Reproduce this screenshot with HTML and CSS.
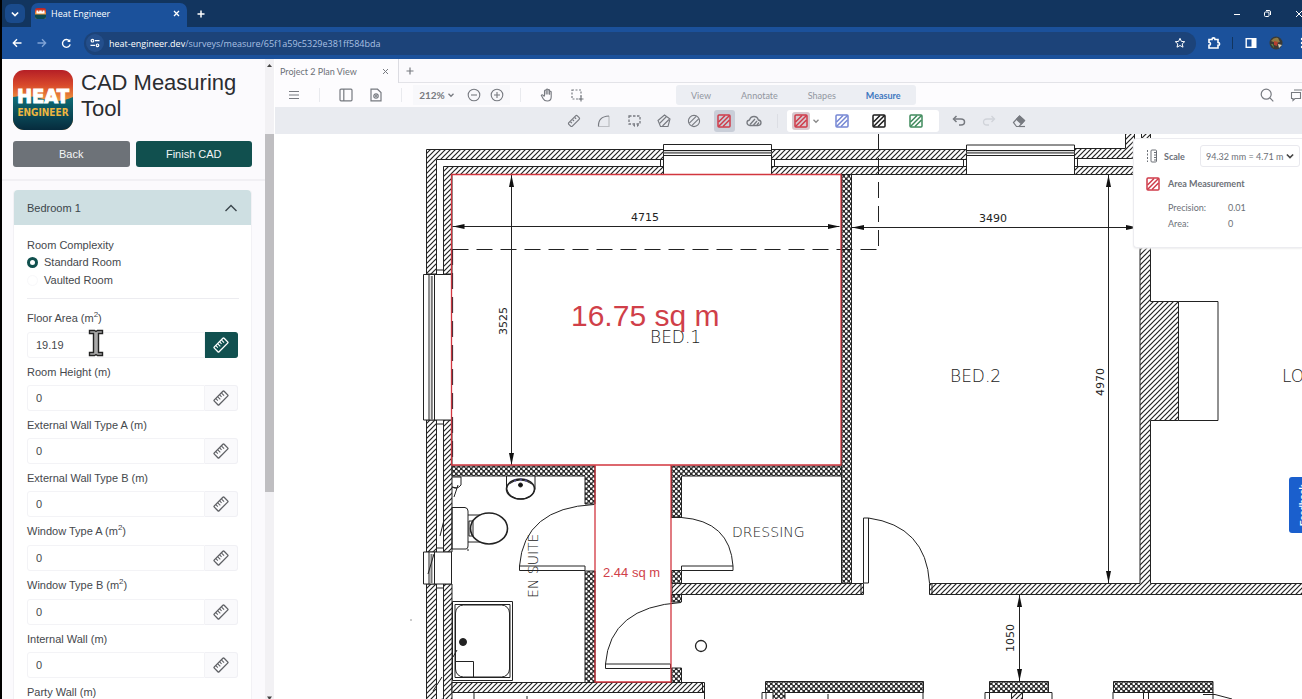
FILE: index.html
```html
<!DOCTYPE html>
<html lang="en">
<head>
<meta charset="utf-8">
<title>Heat Engineer</title>
<link rel="stylesheet" href="styles.css">
</head>
<body>
<svg width="0" height="0" class="defs" aria-hidden="true">
  <defs>
    <linearGradient id="sunset" x1="0" y1="0" x2="0" y2="1">
      <stop offset="0" stop-color="#b51f26"/><stop offset=".25" stop-color="#d8482b"/><stop offset=".52" stop-color="#ef9a3f"/>
    </linearGradient>
    <linearGradient id="sea" x1="0" y1="0" x2="0" y2="1">
      <stop offset="0" stop-color="#0f6f78"/><stop offset="1" stop-color="#062b3d"/>
    </linearGradient>
    <symbol id="ruler" viewBox="0 0 18 18">
      <g transform="rotate(-45 9 9)" fill="none" stroke="currentColor" stroke-width="1.5"><rect x="1.2" y="5.2" width="15.6" height="7.6" rx="1"/><path d="M4.4 5.5v3M7.4 5.5v4M10.4 5.5v3M13.4 5.5v4" stroke-width="1.2"/></g>
    </symbol>
    <symbol id="hatch-box" viewBox="0 0 14 14">
      <rect x="1" y="1" width="12" height="12" rx="1" fill="none" stroke="currentColor" stroke-width="1.5"/>
      <path d="M1.500 8l6.500-6.500M1.500 12.500l11-11M6 12.500l6.500-6.500" fill="none" stroke="currentColor" stroke-width="1.500"/>
    </symbol>
    <symbol id="chev" viewBox="0 0 8 8"><path d="M1.500 2.800l2.500 2.500 2.500-2.500" fill="none" stroke="currentColor" stroke-width="1.300"/></symbol>
  </defs>
</svg>

<header class="browser">
  <div class="tabstrip">
    <button class="tabsearch" aria-label="Search tabs"><svg width="10" height="10"><use href="#chev"/></svg></button>
    <div class="tab">
      <svg width="11" height="11" viewBox="0 0 60 60"><rect width="60" height="60" rx="12" fill="url(#sunset)"/><path d="M0 36h60v12q0 12-12 12H12Q0 60 0 48z" fill="#0c4a50"/><path d="M8 14h10v7h5v-7h14v7h5v-7h10v16H8z" fill="#fff"/></svg>
      <span class="tab-title">Heat Engineer</span>
      <button class="ghost" aria-label="Close tab"><svg width="7" height="7" viewBox="0 0 7 7"><path d="M1 1l5 5M6 1L1 6" stroke="currentColor" stroke-width="1.300"/></svg></button>
    </div>
    <button class="ghost newtab" aria-label="New tab"><svg width="8" height="8" viewBox="0 0 8 8"><path d="M4 0.500v7M.500 4h7" stroke="currentColor" stroke-width="1.500"/></svg></button>
    <div class="winctl">
      <button class="ghost" aria-label="Minimise"><svg width="8" height="8" viewBox="0 0 8 8"><path d="M1 4.500h6" stroke="currentColor"/></svg></button>
      <button class="ghost" aria-label="Restore"><svg width="9" height="9" viewBox="0 0 9 9" fill="none" stroke="currentColor"><rect x="1.500" y="3" width="4.500" height="4.500" rx="1"/><path d="M3 1.500h3q1.500 0 1.500 1.500v3"/></svg></button>
      <button class="ghost" aria-label="Close"><svg width="8" height="8" viewBox="0 0 8 8"><path d="M1 1l6 6M7 1L1 7" stroke="currentColor"/></svg></button>
    </div>
  </div>
  <div class="navbar">
    <button class="ghost nav" aria-label="Back"><svg width="10" height="10" viewBox="0 0 10 10" fill="none" stroke="currentColor" stroke-width="1.400"><path d="M9.500 5H1.500M5 1.200L1.300 5 5 8.800"/></svg></button>
    <button class="ghost nav dim" aria-label="Forward"><svg width="10" height="10" viewBox="0 0 10 10" fill="none" stroke="currentColor" stroke-width="1.300"><path d="M.5 5h8M5 1.200L8.700 5 5 8.800"/></svg></button>
    <button class="ghost nav" aria-label="Reload"><svg width="11" height="11" viewBox="0 0 11 11" fill="none" stroke="currentColor" stroke-width="1.400"><path d="M9.200 6.300A3.900 3.900 0 1 1 8.300 2.800"/><path d="M9.300.8v3.100H6.200z" fill="currentColor" stroke="none"/></svg></button>
    <div class="omnibox">
      <span class="siteinfo"><svg width="10" height="10" viewBox="0 0 10 10" fill="none" stroke="currentColor" stroke-width="1.200"><circle cx="2.500" cy="2.700" r="1.300"/><path d="M5 2.700h4.500M.5 7.300H5"/><circle cx="7.500" cy="7.300" r="1.300"/></svg></span>
      <span class="url"><b>heat-engineer.dev</b>/surveys/measure/65f1a59c5329e381ff584bda</span>
      <button class="ghost star" aria-label="Bookmark"><svg width="12" height="12" viewBox="0 0 12 12"><path d="M6 1.300l1.400 3.100 3.300.3-2.500 2.200.8 3.300L6 8.500l-3 1.700.8-3.300L1.300 4.700l3.300-.3z" fill="none" stroke="currentColor"/></svg></button>
    </div>
    <button class="ghost ext" aria-label="Extensions"><svg width="14" height="14" viewBox="0 0 14 14" fill="none" stroke="currentColor" stroke-width="1.600"><path d="M2 3.500h3q0-1.600 1.500-1.600T8 3.500h3v3q1.600 0 1.600 1.400T11 9.300V12H2V9.200q1.500 0 1.500-1.400T2 6.300z"/></svg></button>
    <span class="navdiv"></span>
    <button class="ghost side" aria-label="Side panel"><svg width="12" height="12" viewBox="0 0 12 12"><rect x="1.200" y="1.700" width="9.600" height="8.600" fill="none" stroke="currentColor" stroke-width="1.400"/><path d="M6.500 1.500H11v9H6.500z" fill="currentColor"/></svg></button>
    <button class="ghost avatar" aria-label="Profile"><svg width="14" height="14" viewBox="0 0 14 14"><circle cx="7" cy="7" r="6.500" fill="#3a3a35"/><path d="M2 5q3-4 7-3l2 4-4 1z" fill="#8f7a45"/><path d="M5 5l4 1-1 4-3-1z" fill="#b4402f"/><path d="M9 8l4 1-3 3z" fill="#d9d2c0"/><path d="M2 8l3 4-1-4z" fill="#5d8a4b"/></svg></button>
    <button class="ghost menu" aria-label="Menu"><svg width="4" height="12" viewBox="0 0 4 12" fill="currentColor"><circle cx="2" cy="2" r="1.200"/><circle cx="2" cy="6" r="1.200"/><circle cx="2" cy="10" r="1.200"/></svg></button>
  </div>
</header>

<main class="app">
  <aside class="sidebar">
    <div class="side-head">
      <div class="brand">
        <svg class="logo" width="60" height="60" viewBox="0 0 60 60" role="img" aria-label="Heat Engineer">
          <clipPath id="lc"><rect width="60" height="60" rx="11"/></clipPath>
          <g clip-path="url(#lc)"><rect width="60" height="60" fill="url(#sunset)"/><path d="M0 27q15-3 30 2t30-2v33H0z" fill="url(#sea)"/></g>
          <text x="30" y="33" class="logo-heat" text-anchor="middle">HEAT</text>
          <text x="30" y="46" class="logo-eng" text-anchor="middle">ENGINEER</text>
        </svg>
        <h1>CAD Measuring Tool</h1>
      </div>
      <div class="actions"><button class="btn grey">Back</button><button class="btn teal">Finish CAD</button></div>
    </div>
    <section class="card">
      <button class="card-head">Bedroom 1 <svg width="14" height="8" viewBox="0 0 14 8"><path d="M1.500 7L7 1.500 12.500 7" fill="none" stroke="currentColor" stroke-width="1.400"/></svg></button>
      <form class="card-body">
        <fieldset>
          <legend>Room Complexity</legend>
          <label><input type="radio" name="complexity" checked>Standard Room</label>
          <label><input type="radio" name="complexity">Vaulted Room</label>
        </fieldset>
        <hr>
        <div class="field"><label class="tall" for="f1">Floor Area (m<sup>2</sup>)</label><div class="row"><input type="text" id="f1" value="19.19"><button type="button" class="on" aria-label="Measure floor area"><svg width="16" height="16"><use href="#ruler"/></svg></button></div></div>
        <div class="field"><label for="f2">Room Height (m)</label><div class="row"><input type="text" id="f2" value="0"><button type="button" aria-label="Measure"><svg width="16" height="16"><use href="#ruler"/></svg></button></div></div>
        <div class="field"><label for="f3">External Wall Type A (m)</label><div class="row"><input type="text" id="f3" value="0"><button type="button" aria-label="Measure"><svg width="16" height="16"><use href="#ruler"/></svg></button></div></div>
        <div class="field"><label for="f4">External Wall Type B (m)</label><div class="row"><input type="text" id="f4" value="0"><button type="button" aria-label="Measure"><svg width="16" height="16"><use href="#ruler"/></svg></button></div></div>
        <div class="field"><label class="tall" for="f5">Window Type A (m<sup>2</sup>)</label><div class="row"><input type="text" id="f5" value="0"><button type="button" aria-label="Measure"><svg width="16" height="16"><use href="#ruler"/></svg></button></div></div>
        <div class="field"><label class="tall" for="f6">Window Type B (m<sup>2</sup>)</label><div class="row"><input type="text" id="f6" value="0"><button type="button" aria-label="Measure"><svg width="16" height="16"><use href="#ruler"/></svg></button></div></div>
        <div class="field"><label for="f7">Internal Wall (m)</label><div class="row"><input type="text" id="f7" value="0"><button type="button" aria-label="Measure"><svg width="16" height="16"><use href="#ruler"/></svg></button></div></div>
        <div class="field"><label for="f8">Party Wall (m)</label><div class="row"><input type="text" id="f8" value="0"><button type="button" aria-label="Measure"><svg width="16" height="16"><use href="#ruler"/></svg></button></div></div>
      </form>
    </section>
  </aside>
  <div class="scroll" aria-hidden="true"><svg width="9" height="12" viewBox="0 0 9 12"><path d="M2 8l2.500-3L7 8z" fill="#444"/></svg><span class="thumb"></span><svg width="9" height="6" viewBox="0 0 9 6"><path d="M2 3.500h5L4.500 7z" fill="#444"/></svg></div>

  <section class="viewer">
    <div class="doctabs">
      <div class="doctab"><span>Project 2 Plan View</span><button class="plain" aria-label="Close document"><svg width="7" height="7" viewBox="0 0 7 7"><path d="M1 1l5 5M6 1L1 6" stroke="currentColor"/></svg></button></div>
      <button class="plain add" aria-label="Add document"><svg width="8" height="8" viewBox="0 0 8 8"><path d="M4 .5v7M.5 4h7" stroke="currentColor" stroke-width="1.200"/></svg></button>
    </div>
    <div class="bar top">
      <button class="ib" aria-label="Menu"><svg width="12" height="10" viewBox="0 0 12 10"><path d="M1 1.500h10M1 5h10M1 8.500h10" stroke="currentColor"/></svg></button>
      <i class="sep"></i>
      <button class="ib" aria-label="Panels"><svg width="14" height="14" viewBox="0 0 14 14" fill="none" stroke="currentColor" stroke-width="1.200"><rect x="1" y="1.200" width="12" height="11.600" rx="1"/><path d="M4.800 1v12"/></svg></button>
      <button class="ib" aria-label="View controls"><svg width="14" height="14" viewBox="0 0 14 14" fill="none" stroke="currentColor" stroke-width="1.200"><path d="M2 1.200h6.500L12 4.500v8.300H2z"/><circle cx="7" cy="8" r="2.200"/><circle cx="7" cy="8" r=".5"/></svg></button>
      <i class="sep"></i>
      <div class="zoom"><button class="plain pct">212% <svg width="8" height="8"><use href="#chev"/></svg></button>
        <button class="plain" aria-label="Zoom out"><svg width="14" height="14" viewBox="0 0 14 14" fill="none" stroke="currentColor" stroke-width="1.100"><circle cx="7" cy="7" r="5.800"/><path d="M4 7h6"/></svg></button>
        <button class="plain" aria-label="Zoom in"><svg width="14" height="14" viewBox="0 0 14 14" fill="none" stroke="currentColor" stroke-width="1.100"><circle cx="7" cy="7" r="5.800"/><path d="M4 7h6M7 4v6"/></svg></button></div>
      <i class="sep"></i>
      <button class="ib" aria-label="Pan"><svg width="14" height="14" viewBox="0 0 14 14" fill="none" stroke="currentColor" stroke-width="1.100"><path d="M4.500 8V3q0-1 .8-1t.9 1v3.500V2q0-1 .8-1t.9 1v4.500V2.500q0-.9.8-.9t.9.9v4.300V4q0-.8.8-.8t.8.800v5q0 4-4 4-2.800 0-4-2.300L1.300 7.300q.8-1.200 2 0L4.500 8.500"/></svg></button>
      <button class="ib" aria-label="Select"><svg width="14" height="14" viewBox="0 0 14 14" fill="none" stroke="currentColor" stroke-width="1.200"><path d="M2 2h9v9H2z" stroke-dasharray="2 1.500"/><path d="M11 8.500v5M8.500 11h5"/></svg></button>
      <nav class="modes"><button>View</button><button>Annotate</button><button>Shapes</button><button class="cur">Measure</button></nav>
      <div class="right">
        <button class="ib" aria-label="Search"><svg width="14" height="14" viewBox="0 0 14 14" fill="none" stroke="currentColor" stroke-width="1.200"><circle cx="6.200" cy="6.200" r="5"/><path d="M10 10l3.300 3.300"/></svg></button>
        <button class="ib" aria-label="Comments"><svg width="14" height="14" viewBox="0 0 14 14" fill="none" stroke="currentColor" stroke-width="1.100"><path d="M1.500 4.500h9v6H5l-2 2v-2H1.500z"/><path d="M4 2h9v6"/></svg></button>
      </div>
    </div>
    <div class="bar tools">
      <button class="ib" aria-label="Distance"><svg width="14" height="14" viewBox="0 0 14 14" fill="none" stroke="currentColor" stroke-width="1.200"><g transform="rotate(-45 7 7)"><rect x="1" y="4.500" width="12" height="5" rx="1.200"/><path d="M4 5v2M7 5v2M10 5v2"/></g></svg></button>
      <button class="ib" aria-label="Arc"><svg width="14" height="14" viewBox="0 0 14 14" fill="none" stroke="currentColor" stroke-width="1.200"><path d="M1.500 12.500Q1 2.500 12 2"/><path d="M1.500 12.500H12V2" stroke-opacity=".4"/></svg></button>
      <button class="ib" aria-label="Perimeter"><svg width="15" height="14" viewBox="0 0 15 14" fill="none" stroke="currentColor" stroke-width="1.300"><path d="M2 2h11v8H2z" stroke-dasharray="2.500 1.500"/><path d="M6 11.500l2-1.500v3zM10 10l2 1.500-2 1.500z" fill="currentColor" stroke="none"/></svg></button>
      <button class="ib" aria-label="Polygon area"><svg width="14" height="14" viewBox="0 0 14 14" fill="none" stroke="currentColor" stroke-width="1.100"><path d="M1 6.500L7.500 1 13 5l-2 7.500H3.500z"/><path d="M2.500 9.500l7-7M5.500 12l6.500-6.500"/></svg></button>
      <button class="ib" aria-label="Ellipse area"><svg width="14" height="14" viewBox="0 0 14 14" fill="none" stroke="currentColor" stroke-width="1.100"><circle cx="7" cy="7" r="5.600"/><path d="M2.300 9.200l6.900-6.900M4.800 11.700l6.900-6.900"/></svg></button>
      <button class="ib red" aria-label="Rectangle area"><span class="hl"><svg width="14" height="14"><use href="#hatch-box"/></svg></span></button>
      <button class="ib" aria-label="Cloud area"><svg width="16" height="14" viewBox="0 0 16 14" fill="none" stroke="currentColor" stroke-width="1.300"><path d="M4 11.500q-3-.3-3-2.700T3.500 6Q4.500 2.500 8 2.500T12.300 6Q15 6.300 15 8.800t-3 2.700z"/><path d="M4 10.500l5-5.500M7.500 11L11 7M11 11l2-2.500"/></svg></button>
      <i class="sep"></i>
      <div class="presets">
        <button class="ps red" aria-label="Red preset"><span class="hl small"><svg width="14" height="14"><use href="#hatch-box"/></svg></span><svg class="grey-ic" width="8" height="8"><use href="#chev"/></svg></button>
        <button class="ps blue" aria-label="Blue preset"><svg width="14" height="14"><use href="#hatch-box"/></svg></button>
        <button class="ps black" aria-label="Black preset"><svg width="14" height="14"><use href="#hatch-box"/></svg></button>
        <button class="ps green" aria-label="Green preset"><svg width="14" height="14"><use href="#hatch-box"/></svg></button>
      </div>
      <button class="ib" aria-label="Undo"><svg width="14" height="12" viewBox="0 0 14 12" fill="none" stroke="currentColor" stroke-width="1.500"><path d="M2 4h7q3.500 0 3.500 3T9 10H7"/><path d="M4.500 1L1.500 4l3 3"/></svg></button>
      <button class="ib faint" aria-label="Redo"><svg width="14" height="12" viewBox="0 0 14 12" fill="none" stroke="currentColor" stroke-width="1.300"><path d="M12 4H5Q1.500 4 1.500 7T5 10h2"/><path d="M9.500 1l3 3-3 3"/></svg></button>
      <button class="ib" aria-label="Eraser"><svg width="14" height="14" viewBox="0 0 14 14" fill="none" stroke="currentColor" stroke-width="1.200"><path d="M1.500 8.500L7.500 2l5 4.500-5.500 6H4.500z"/><path d="M7.500 2l5 4.500-3 3.300-5-4.500z" fill="currentColor"/><path d="M7 12.500h6"/></svg></button>
    </div>
    <div class="canvas">
      <svg class="plan" width="1027" height="565" viewBox="275 134 1027 565">
        <defs>
          <pattern id="h" width="5" height="5" patternUnits="userSpaceOnUse"><rect width="5" height="5" fill="#fff"/><path d="M-1 1l2-2M-1 6L6-1M4 6l2-2" stroke="#222" stroke-width="1.200"/></pattern>
          <pattern id="x" width="5" height="5" patternUnits="userSpaceOnUse"><rect width="5" height="5" fill="#2b2b2b"/><circle cx="1.250" cy="1.250" r="1.300" fill="#fff"/><circle cx="3.750" cy="3.750" r="1.300" fill="#fff"/></pattern>
          <marker id="a" viewBox="0 0 12 6" refX="12" refY="3" markerWidth="12" markerHeight="6" markerUnits="userSpaceOnUse" orient="auto-start-reverse"><path d="M0 .5L12 3 0 5.500z" fill="#111"/></marker>
        </defs>
        <g fill="url(#h)" stroke="#222" stroke-width="1">
          <path d="M426.500 149.500H663.500V159.500H436.500V274H426.500zM443.500 166.500H663.500V174.500H452V274H443.500z"/>
          <path d="M771.500 149.500H966.500V159.500H771.500zM771.500 166.500H966.500V174.500H771.500z"/>
          <path d="M1074.500 148.500H1125.500V130H1134.500V158.500H1074.500zM1074.500 166.500H1145V174.500H1074.500zM1141.500 130H1150.500V145H1141.500z"/>
          <path d="M426.500 420H436.500V552H426.500zM443.500 420H452V552H443.500zM426.500 584H436.500V702H426.500zM443.500 584H452V702H443.500z"/>
          <path d="M452 682.500H704.500V692.500H452zM672 583.500H863.500V594.500H672z"/>
          <path d="M929.500 583.500H1140V240H1150.500V301.500H1178.500V420.500H1150.500V583.500H1310V594.500H929.500z"/>
          <path d="M1011.500 692H1022.500V702H1011.500z"/>
        </g>
        <g fill="url(#x)" stroke="#222">
          <path d="M841.500 174.500H851.500V583.500H841.500zM452 466H595V504H585V476H452zM671.500 466H841.500V476H681.500V517H671.500z"/>
          <path d="M585 571H595V682.500H585zM671.500 570.500H681.500V583.500H671.500zM671.500 594.500H681.500V602H671.500zM671.500 668H681.500V682.500H671.500z"/>
          <path d="M765.500 681.500H923.500V692.500H785V702H773V692.500H765.500zM989.500 681.500H1048.500V692.500H989.500zM1113.500 681.500H1213V692.500H1113.500z"/>
        </g>
        <g fill="#fff" stroke="#222">
          <path d="M663.500 144.500H771.500V174.500H663.500zM966.500 145H1074.500V174.500H966.500zM423.500 274.500H451.500V420H423.500zM423.500 552H451.500V584H423.500z"/>
          <path d="M519.500 566H585V570.500H519.500zM681.500 566H733V570.500H681.500zM605.500 664H670.500V668.500H605.500zM863.500 518H868.500V583H863.500z"/>
          <path d="M1178.500 301.500H1218V420.500H1178.500z"/>
        </g>
        <g fill="none" stroke="#222">
          <path d="M663.500 150.500H771.500M663.500 155.500H771.500M966.500 150.500H1074.500M966.500 155.500H1074.500M429 274V420M434.500 274V420M436.500 270H443M436.500 424H443M436.500 548H443M436.500 588H443"/>
          <path d="M663.500 152.800H771.500M966.500 152.800H1074.500M431.800 276V420M431.500 554V583" stroke="#777" stroke-width="2"/>
          <path d="M429 552V584M434.500 552V584M428 574l6-20M660.500 159V166M774.500 159V166M963.500 159V166M1077.500 159V166"/>
          <path d="M851.500 174.500H1140M861 583V594M932 583V594M702.500 682V692M704.500 692V699"/>
          <path d="M594 504.500Q524 508 519.500 566M681.500 517.500Q730 521 733 566M681 602.500Q610 607 605.500 664M868.500 518Q926 526 929.500 583M671 517.500H682"/>
          <path d="M766 692.500H762V702M766 692V702M785 692.500H923V702M828 699V694M985 702V692.500H1049M989.500 692V702M1048 692.500H1052V702M1113 692V702M1143.500 692V702M1148.500 692V702M1213 692V702M1203 694.500H1215L1232 699" />
          <path d="M452.500 249.500H878.500" stroke-dasharray="16 8" stroke-width="1.200"/><path d="M878.500 134V249.500" stroke-dasharray="16 8"/>
          <circle cx="701" cy="646" r="5.500" stroke-width="1.300"/>
          <path d="M474 692V699M527 699v-3M443 699l-12 3M440 536l4-16M433 691l9-14"/>
        </g>
        <g fill="none" stroke="#222">
          <path d="M452 507.500H465Q468 508 468 511V546Q468 549 466 549H452z"/>
          <path d="M468 515H480M468 542H480"/><ellipse cx="489" cy="528.500" rx="18.500" ry="15.500" stroke-width="1.600"/><path d="M469 521h4v15h-4zM468 549v2"/>
          <path d="M506.500 476V489Q510 499 521 499T535 489V476"/><ellipse cx="520.500" cy="489" rx="14" ry="10" stroke-width="1.600"/><path d="M509 484q11-8 23 0" /><circle cx="520.500" cy="485" r="2" fill="#111"/><path d="M515 479v3M521 478v3M526 479v3" stroke="#5a52a8"/>
          <path d="M452 477h9v8q-4 5-9 2M454 497l4-12M452 487l5 1"/>
          <path d="M452.500 601.500H512.500V680.500H452.500zM455 604.500H510V677.500H455zM455 661.500H473.500V677.500"/><rect x="455.500" y="605" width="54" height="72" rx="8"/><circle cx="463" cy="642" r="3.500" fill="#222"/><path d="M453 657l4-7"/>
        </g>
        <g stroke="#222" fill="none">
          <path d="M452.500 226.500H839.500" marker-start="url(#a)" marker-end="url(#a)"/><path d="M852 227.500H1138" marker-start="url(#a)" marker-end="url(#a)"/><path d="M511.500 175V465" marker-start="url(#a)" marker-end="url(#a)"/><path d="M1108.500 175V583" marker-start="url(#a)" marker-end="url(#a)"/><path d="M1019.500 595V681" marker-start="url(#a)" marker-end="url(#a)"/>
        </g>
        <g fill="none" stroke="#d2363f" stroke-width="1.300"><path d="M451.500 174.500H841V465H451.500zM595 465H671V682H595z"/></g>
        <path d="M452.500 249V465" stroke="#54303a" stroke-width="1.200" stroke-dasharray="16 8" fill="none"/>
        <g class="measures"><text x="631" y="221">4715</text><text x="979" y="222">3490</text><text transform="translate(507 335) rotate(-90)">3525</text><text transform="translate(1104 396) rotate(-90)">4970</text><text transform="translate(1014 652) rotate(-90)">1050</text></g>
        <g class="room"><text x="650" y="343" class="big">BED.1</text><text x="950" y="382" class="big">BED.2</text><text x="732" y="537">DRESSING</text><text transform="translate(538 598) rotate(-90)">EN SUITE</text><text x="1282" y="382" class="big">LO</text></g>
        <text x="571" y="326" class="area-l">16.75 sq m</text><text x="603" y="577" class="area-s">2.44 sq m</text>
        <circle cx="411" cy="620" r="1" fill="#bbb"/>
      </svg>
      <section class="panel">
        <div class="scale"><svg width="12" height="14" viewBox="0 0 12 14" fill="none" stroke="currentColor"><path d="M1.500 1v12" stroke-dasharray="2 1.500"/><rect x="5" y="1" width="5.500" height="12" rx="1"/><path d="M8 3.500h2.500M8 6h2.500M8 8.500h2.500M8 11h2.500"/></svg>
          <label for="scale">Scale</label>
          <div class="selwrap"><select id="scale"><option>94.32 mm = 4.71 m</option></select><svg width="10" height="10"><use href="#chev"/></svg></div></div>
        <h2><svg class="redic" width="14" height="14"><use href="#hatch-box"/></svg>Area Measurement</h2>
        <dl><dt>Precision:</dt><dd>0.01</dd><dt>Area:</dt><dd>0</dd></dl>
      </section>
      <button class="feedback">Feedback</button>
    </div>
  </section>
</main>
<svg class="ibeam" width="16" height="28" viewBox="0 0 16 28" aria-hidden="true"><path d="M1.500 1.500h5l1.500 1 1.500-1h5v3h-4v19h4v3h-5l-1.500-1-1.500 1h-5v-3h4v-19h-4z" fill="#aaa" stroke="#222" stroke-width="1.400"/></svg>
</body>
</html>
```
FILE: styles.css
```css
* { box-sizing: border-box; }
body { margin: 0; height: 100vh; overflow: hidden; display: flex; flex-direction: column; border-left: 2px solid #000; background: #fff; font-family: "Liberation Sans", Arial, sans-serif; font-size: 11px; color: #45484c; }
button { font: inherit; color: inherit; border: 0; background: none; padding: 0; display: flex; align-items: center; justify-content: center; }
svg { flex: none; display: block; }
.defs { position: absolute; }

.browser { flex: none; color: #fff; font-family: "Open Sans", "Noto Sans", sans-serif; font-size: 9px; }
.tabstrip { height: 27px; background: #12355f; display: flex; align-items: center; overflow: hidden; }
.tabsearch { width: 20px; height: 19px; border-radius: 6px; background: #1a4b8c; margin: 0 6px 0 3px; }
.tab { width: 156px; height: 24px; align-self: flex-end; background: #1b519b; border-radius: 7px 7px 0 0; display: flex; align-items: center; padding: 0 7px 3px 4px; gap: 5px; }
.tab-title { flex: 1; }
.newtab { width: 28px; }
.winctl { margin-left: auto; margin-right: -12px; display: flex; }
.winctl .ghost { width: 31px; height: 24px; }
.navbar { height: 32px; background: #1b519b; display: flex; align-items: center; overflow: hidden; padding-left: 2px; }
.nav { width: 25px; }
.dim { color: #7fa3d6; }
.omnibox { flex: 1; height: 23px; margin-left: 5px; border-radius: 12px; background: #1c4379; display: flex; align-items: center; padding: 0 10px 0 2px; }
.siteinfo { width: 18px; height: 18px; border-radius: 9px; background: #244f8c; display: flex; align-items: center; justify-content: center; }
.url { margin-left: 5px; color: #a9c0e2; font-size: 9px; }
.url b { font-weight: 400; color: #fff; }
.star { margin-left: auto; }
.ext { width: 36px; }
.navdiv { width: 1px; height: 12px; background: #12355f; }
.side { width: 36px; }
.avatar { width: 14px; }
.menu { width: 16px; margin-left: 11px; margin-right: -8px; }

.app { flex: 1; min-height: 0; display: flex; }
.sidebar { width: 263px; flex: none; background: #fbfafd; overflow: hidden; }
.side-head { padding: 11px 13px 12px 11px; border-bottom: 2px solid #f1f0f4; }
.brand { display: flex; gap: 8px; }
h1 { margin: 0; font-size: 22px; line-height: 26px; font-weight: 400; color: #2b2d31; }
.logo-heat { font: 700 20px "Liberation Sans Narrow", "DejaVu Sans Condensed", sans-serif; fill: #fff; stroke: #fff; }
.logo-eng { font: 700 10px "Liberation Sans Narrow", "DejaVu Sans Condensed", sans-serif; fill: #edb53f; }
.actions { display: flex; gap: 6px; margin-top: 11px; }
.btn { flex: 1; height: 26px; border-radius: 3px; color: #f3f5f6; }
.grey { background: #6d7278; }
.teal { background: #11504f; }
.card { margin: 9px 13px 0 11px; background: #fff; border: 1px solid #f2f1f5; border-top: 0; border-radius: 4px; }
.card-head { width: 100%; height: 35px; padding: 0 13px; background: #cedfe2; border-radius: 4px 4px 0 0; justify-content: space-between; color: #3b464b; }
.card-body { padding: 12px 12px 0 13px; margin: 0; }
fieldset { border: 0; padding: 0; margin: 0; display: flex; flex-direction: column; }
legend { padding: 0; line-height: 16px; }
fieldset label { display: flex; align-items: center; line-height: 18px; gap: 6px; }
input[type="radio"] { appearance: none; margin: 0; width: 11px; height: 11px; border-radius: 50%; border: 1px solid #f8f8fa; }
input[type="radio"]:checked { border: 3px solid #10504e; }
hr { border: 0; border-top: 1px solid #ececf0; margin: 9px 0 11px; }
.field > label { display: block; line-height: 16px; }
.field > label.tall { line-height: 17px; }
sup { font-size: 8px; line-height: 0; }
.row { display: flex; height: 26px; margin: 5px 1px 6px 0; }
.row input { flex: 1; min-width: 0; border: 1px solid #f3f3f6; border-radius: 3px 0 0 3px; padding: 0 8px; font: inherit; color: #45484c; background: #fff; }
.row button { width: 33px; border: 1px solid #f0f0f4; border-left: 0; background: #fafafc; border-radius: 0 3px 3px 0; color: #606266; }
.row button.on { background: #11504f; border-color: #11504f; color: #fff; }
.scroll { width: 9px; flex: none; background: #f2f1f4; display: flex; flex-direction: column; justify-content: space-between; }
.thumb { height: 56%; margin: 63px 0 auto; background: #bfbec1; }
.ibeam { position: absolute; left: 88px; top: 329px; }

.viewer { flex: 1; min-width: 0; display: flex; flex-direction: column; font-family: Lato, sans-serif; font-size: 9px; color: #6c7077; padding-left: 1px; }
.plain { color: #777a80; }
.doctabs { height: 24px; background: #fbfafd; display: flex; flex: none; border-bottom: 1px solid #e3e3e8; }
.doctab { width: 124px; height: 24px; background: #fdfcfe; border-right: 1px solid #dcdce2; display: flex; align-items: center; justify-content: space-between; padding: 0 9px 0 5px; }
.add { width: 21px; }
.bar { display: flex; align-items: center; flex: none; overflow: hidden; }
.ib { width: 30px; height: 24px; flex: none; color: #777a80; }
.sep { width: 1px; height: 14px; background: #e9eaee; margin: 0 11px 0 10px; flex: none; }
.top { height: 24px; background: #fdfcfe; padding-left: 4px; }
.zoom { display: flex; height: 20px; align-items: center; background: #f8f8fb; width: 97px; gap: 9px; }
.pct { font-size: 10px; font-weight: 700; width: 42px; margin-left: 3px; gap: 2px; }
.modes { display: flex; height: 20px; margin-left: 84px; background: #eceef3; flex: none; border-radius: 3px; color: #9296a0; }
.modes button { padding: 0 15px; }
.modes .cur { color: #3e78c0; font-weight: 700; }
.right { display: flex; margin-left: auto; margin-right: -10px; }
.tools { height: 27px; background: #e9ebf0; padding-left: 284px; }
.tools .sep { margin: 0 9px 0 8px; background: #dcdee4; }
.ib.red, .ps.red, .redic { color: #cf3b4a; }
.hl { width: 21px; height: 22px; display: flex; align-items: center; justify-content: center; background: #c9ced8; border-radius: 3px; }
.hl.small { width: 18px; height: 18px; background: #d9c9cf; }
.blue { color: #7587d4; }
.black { color: #1b1b1b; }
.green { color: #3f8a5c; }
.ib.faint { color: #d0d3d9; }
.presets { display: flex; height: 22px; background: #fff; padding-right: 5px; margin-right: 5px; border-radius: 3px; }
.ps { width: 37px; }
.ps.red { width: 36px; gap: 2px; padding-left: 2px; }
.grey-ic { color: #888; }
.canvas { position: relative; flex: 1; min-height: 0; overflow: hidden; background: #fff; }
.measures text, .room text { fill: #222; }
.measures { font: 11px "DejaVu Sans", sans-serif; }
.room { font: 200 14px "DejaVu Sans Light", "DejaVu Sans", sans-serif; }
.room .big { font-size: 17px; }
.area-l, .area-s { font-family: "Liberation Sans", Arial, sans-serif; fill: #d03f49; }
.area-l { font-size: 30px; }
.area-s { font-size: 13px; }

.panel { position: absolute; top: 4px; right: 0; width: 169px; height: 110px; background: #fff; border: 1px solid #ececf0; border-right: 0; border-radius: 4px 0 0 4px; padding: 6px 2px 0 12px; box-shadow: 0 1px 2px #eee; }
.scale { display: flex; align-items: center; }
.scale label { font-weight: 700; margin-left: 6px; }
.selwrap { position: relative; margin-left: auto; }
.selwrap select { appearance: none; width: 100px; height: 22px; border: 1px solid #e9e9ee; border-radius: 3px; background: #fff; color: #6c7077; font: inherit; padding: 0 5px; }
.selwrap svg { position: absolute; right: 5px; top: 6px; color: #444; }
h2 { margin: 9px 0 0; font-size: 9px; line-height: 16px; display: flex; align-items: center; gap: 8px; font-weight: 700; }
dl { margin: 8px 0 0 22px; display: grid; grid-template-columns: 60px 1fr; line-height: 16px; }
dd { margin: 0; }
.feedback { position: absolute; right: -15px; top: 343px; width: 28px; height: 56px; background: #1a5fcd; color: #fff; border-radius: 0 3px 3px 0; writing-mode: vertical-rl; transform: rotate(180deg); font: 700 9px "Liberation Sans", sans-serif; }
```
